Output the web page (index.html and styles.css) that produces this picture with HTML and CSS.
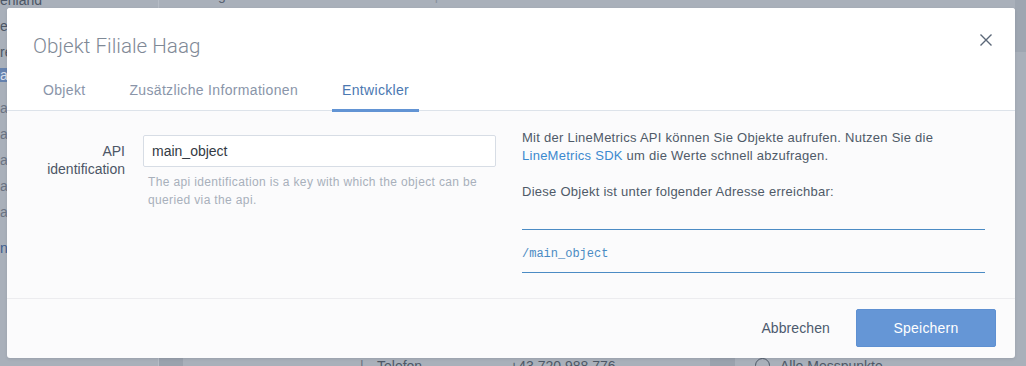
FILE: index.html
```html
<!DOCTYPE html>
<html lang="de">
<head>
<meta charset="utf-8">
<title>Objekt Filiale Haag</title>
<link rel="stylesheet" href="styles.css">
</head>
<body>
<div class="app" aria-hidden="true">
  <aside class="sidebar">
    <ul class="side-list">
      <li>enland</li>
      <li>ebene</li>
      <li>region</li>
      <li class="active"><span>alle Filialen</span></li>
      <li class="dim gap">alpha</li>
      <li class="dim">alpin</li>
      <li class="dim">alt</li>
      <li class="dim">alm</li>
      <li class="dim">alb</li>
      <li class="blue gap">nicht zugeordnet</li>
    </ul>
  </aside>
  <div class="main">
    <div class="main-top"><span class="mt-word">Region</span><span class="mt-sep">|</span></div>
    <div class="main-bottom">
      <div class="dark"></div>
      <div class="contact"><span class="pipe">|</span><span>Telefon</span><span>+43 720 988 776</span></div>
      <div class="dark"></div>
      <div class="panel-item"><span class="ring"></span><span>Alle Messpunkte</span></div>
    </div>
  </div>
  <div class="rightbar"><div class="rb-top"></div></div>
</div>

<div class="modal" role="dialog" aria-labelledby="modal-title">
  <header class="modal-header">
    <h2 class="modal-title" id="modal-title">Objekt Filiale Haag</h2>
    <button class="close" type="button" aria-label="Schließen">
      <svg width="12" height="12" viewBox="0 0 12 12"><path d="M0.5 0.5 L11.5 11.5 M11.5 0.5 L0.5 11.5" stroke="#5b6778" stroke-width="1.4" fill="none"/></svg>
    </button>
  </header>
  <nav class="tabs">
    <a class="tab">Objekt</a>
    <a class="tab">Zusätzliche Informationen</a>
    <a class="tab active">Entwickler</a>
  </nav>
  <div class="modal-body">
    <div class="col-left">
      <div class="field">
        <label class="field-label" for="api">API identification</label>
        <div class="field-control">
          <input id="api" class="text-input" type="text" value="main_object">
          <p class="help">The api identification is a key with which the object can be<br>queried via the api.</p>
        </div>
      </div>
    </div>
    <div class="col-right">
      <p class="info">Mit der LineMetrics API können Sie Objekte aufrufen. Nutzen Sie die<br><a class="link">LineMetrics SDK</a> um die Werte schnell abzufragen.</p>
      <p class="info last">Diese Objekt ist unter folgender Adresse erreichbar:</p>
      <div class="address"><code>/main_object</code></div>
    </div>
  </div>
  <footer class="modal-footer">
    <button class="btn-link" type="button">Abbrechen</button>
    <button class="btn-primary" type="button">Speichern</button>
  </footer>
</div>
</body>
</html>
```

FILE: styles.css
```css
* { box-sizing: border-box; }

body {
  margin: 0;
  width: 1026px;
  height: 366px;
  overflow: hidden;
  background: #a9b0ba;
  font-family: "Liberation Sans", Arial, sans-serif;
  position: relative;
}

/* ---------- dimmed background app ---------- */
.app {
  display: grid;
  grid-template-columns: 158px 1fr 11px;
  height: 385px;
}

.sidebar { overflow: hidden; }

.side-list {
  list-style: none;
  margin: -13px 0 0;
  padding: 0;
  font-size: 14px;
  color: #4c5665;
}
.side-list li {
  line-height: 26px;
  white-space: nowrap;
}
.side-list li.active { padding: 3px 0; line-height: 14px; }
.side-list li.active span {
  display: block;
  background: #6682ae;
  color: #d5ddea;
}
.side-list li.gap { margin-top: 10px; }
.side-list li.dim { color: #6b7484; }
.side-list li.blue { color: #3e5d8e; }

.main {
  display: flex;
  flex-direction: column;
  justify-content: space-between;
  border-left: 1px solid #b6bcc5;
}
.main-top {
  margin-top: -18px;
  line-height: 26px;
  font-size: 14px;
  color: #58616f;
  display: flex;
  padding-left: 41px;
}
.mt-sep { margin-left: 190px; color: #8a929e; }

.main-bottom {
  height: 30px;
  display: grid;
  grid-template-columns: 24px 527px 25px 1fr;
  font-size: 14px;
  line-height: 16px;
  color: #4e5866;
}
.dark { background: #9aa2ad; }
.contact {
  display: grid;
  grid-template-columns: 17px 133px auto;
  padding: 3px 0 0 177px;
}
.pipe { color: #6b7380; }
.panel-item {
  display: flex;
  gap: 10px;
  padding: 3px 0 0 20px;
}
.ring {
  width: 15px;
  height: 15px;
  border: 1.5px solid #4e5866;
  border-radius: 50%;
}

.rightbar { display: flex; flex-direction: column; }
.rb-top { height: 52px; background: #9ea6b1; }

/* ---------- modal ---------- */
.modal {
  position: absolute;
  left: 7px;
  top: 8px;
  width: 1008px;
  height: 350px;
  background: #fbfbfc;
  border-radius: 3px;
  overflow: hidden;
  display: flex;
  flex-direction: column;
  box-shadow: 0 1px 3px rgba(60, 70, 90, 0.15);
}

.modal-header {
  background: #fff;
  display: flex;
  justify-content: space-between;
  align-items: flex-start;
  padding: 23px 23px 0 26px;
}
.modal-title {
  margin: 0;
  font-family: Roboto, "Liberation Sans", Arial, sans-serif;
  font-weight: 300;
  font-size: 20.6px;
  line-height: 30px;
  color: #7f8996;
}
.close {
  margin-top: 3px;
  padding: 0;
  border: 0;
  background: none;
  width: 12px;
  height: 12px;
  display: flex;
}

.tabs {
  background: #fff;
  display: flex;
  gap: 24px;
  padding: 11px 26px 0;
  border-bottom: 1px solid #dde3ea;
}
.tab {
  padding: 8px 10px 9px;
  font-size: 14px;
  line-height: 20px;
  letter-spacing: 0.33px;
  color: #8a95a9;
  border-bottom: 3px solid transparent;
  margin-bottom: -2px;
}
.tab.active {
  color: #4b78b1;
  border-bottom-color: #6294d4;
  position: relative;
}

.modal-body {
  flex: 1;
  display: grid;
  grid-template-columns: 1fr 1fr;
  column-gap: 26px;
  padding: 18px 30px 0 26px;
  border-bottom: 1px solid #ececef;
}

.col-left { padding-top: 6px; }
.field {
  display: grid;
  grid-template-columns: 92px 1fr;
  column-gap: 18px;
}
.field-label {
  text-align: right;
  padding-top: 7px;
  font-size: 14px;
  line-height: 18px;
  color: #4c5666;
}
.text-input {
  display: block;
  width: 100%;
  height: 32px;
  margin: 0;
  padding: 0 8px;
  border: 1px solid #d7dde5;
  border-radius: 2px;
  background: #fff;
  font-family: "Liberation Sans", Arial, sans-serif;
  font-size: 14px;
  color: #333a44;
  outline: none;
}
.help {
  margin: 6px 0 0;
  padding-left: 5px;
  font-size: 12px;
  line-height: 18px;
  letter-spacing: 0.36px;
  color: #a8b0bb;
}

.info {
  margin: 0 0 18px;
  font-size: 13px;
  line-height: 18px;
  letter-spacing: 0.26px;
  color: #4f5a68;
}
.info.last { margin-bottom: 0; }
.link { color: #3b89cf; text-decoration: none; }

.address {
  margin-top: 28px;
  border-top: 1px solid #4b8bc4;
  border-bottom: 1px solid #4b8bc4;
  padding: 14px 0 10px;
  line-height: 16px;
}
.address code {
  font-family: "Liberation Mono", "Courier New", monospace;
  font-size: 12px;
  color: #4a8ac3;
}

.modal-footer {
  display: flex;
  justify-content: flex-end;
  align-items: center;
  gap: 14px;
  padding: 10px 19px 11px;
}
.btn-link {
  border: 0;
  background: none;
  padding: 0 12px;
  font-family: "Liberation Sans", Arial, sans-serif;
  font-size: 14px;
  letter-spacing: 0.1px;
  color: #4c5a6e;
}
.btn-primary {
  width: 140px;
  height: 38px;
  border: 1px solid #5e90d2;
  border-radius: 2px;
  background: #6596d6;
  color: #fff;
  font-family: "Liberation Sans", Arial, sans-serif;
  font-size: 14px;
  letter-spacing: 0.2px;
}
```
